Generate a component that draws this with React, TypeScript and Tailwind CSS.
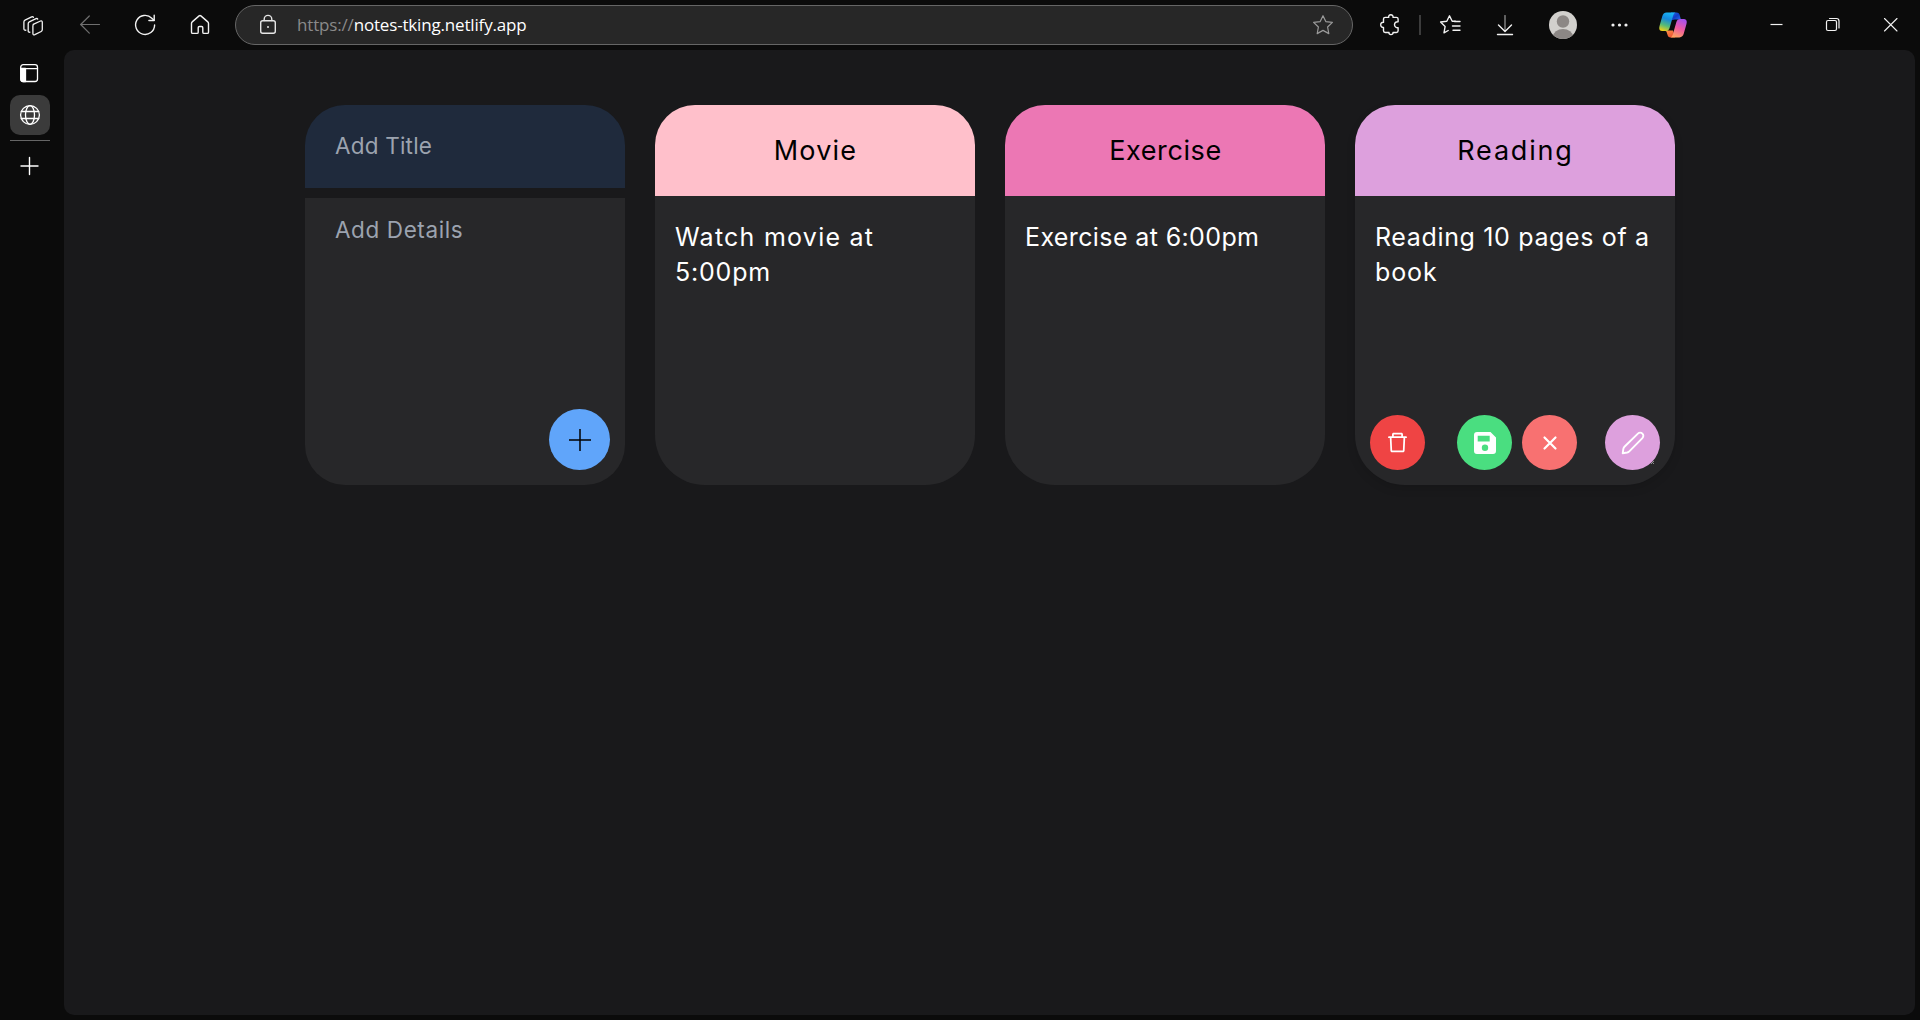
import type { ReactNode } from 'react';
import { AiOutlineDelete } from 'react-icons/ai';

type IconProps = { className?: string; children: ReactNode; size?: number; width?: number };

function Icon({ className = '', children, size = 24, width = 1.2 }: IconProps) {
  return (
    <svg
      width={size}
      height={size}
      viewBox={`0 0 ${size} ${size}`}
      fill="none"
      stroke="currentColor"
      strokeWidth={width}
      strokeLinecap="round"
      strokeLinejoin="round"
      className={`block shrink-0 ${className}`}
    >
      {children}
    </svg>
  );
}

function CopilotLogo() {
  return (
    <svg width="28" height="26" viewBox="0 0 28 26" className="block shrink-0">
      <defs>
        <linearGradient id="cpLeft" x1="0.6" y1="0" x2="0.3" y2="1">
          <stop offset="0" stopColor="#18b4f5" />
          <stop offset="0.35" stopColor="#1688dc" />
          <stop offset="0.7" stopColor="#55bb78" />
          <stop offset="1" stopColor="#e9cf1d" />
        </linearGradient>
        <linearGradient id="cpRight" x1="0.7" y1="0" x2="0.3" y2="1">
          <stop offset="0" stopColor="#a650ee" />
          <stop offset="0.5" stopColor="#ee5aa2" />
          <stop offset="1" stopColor="#ffa45e" />
        </linearGradient>
        <linearGradient id="cpTop" x1="0" y1="0" x2="1" y2="1">
          <stop offset="0" stopColor="#2a72ea" />
          <stop offset="0.5" stopColor="#123bc6" />
          <stop offset="1" stopColor="#2870ee" />
        </linearGradient>
        <linearGradient id="cpBottom" x1="0" y1="0" x2="1" y2="1">
          <stop offset="0" stopColor="#ff9a43" />
          <stop offset="1" stopColor="#e94235" />
        </linearGradient>
      </defs>
      <path d="M12 .6h5.500c2 0 2.800 1 3.300 2.800l1.100 4.200h-6l-5 1z" fill="url(#cpTop)" />
      <path d="M5.500 18.400h8.500l2 7h-4.200c-2.100 0-2.900-1.200-3.400-3l-1-3z" fill="url(#cpBottom)" />
      <path d="M7.600.6h9c-1.500.5-2.100 2-2.700 4l-3.300 11.300c-.6 2-1.700 3.200-4 3.200H3.200c-3 0-3.400-2.600-2.600-5.300L3.200 4.400C4 1.900 5.200.6 7.600.6z" fill="url(#cpLeft)" />
      <path d="M20.400 25.400h-9c1.500-.5 2.100-2 2.700-4l3.300-11.300c.6-2 1.700-3.200 4-3.200h3.400c3 0 3.400 2.600 2.600 5.300l-2.600 9.400c-.8 2.500-2 3.800-4.400 3.800z" fill="url(#cpRight)" />
    </svg>
  );
}

function TopBar() {
  return (
    <header className="flex h-[50px] shrink-0 items-center text-[#f2f2f2]">
      <Icon className="ml-[21px]" width={1.3}>
        <path d="M12.200 11.400 19.500 8c.9-.4 1.800 0 1.800 1.200v7.400c0 .9-.3 1.500-1.100 1.900l-6.400 3.200c-1.100.5-1.900 0-1.900-1.100v-7.700c0-.7.1-1.200.8-1.500z" />
        <path d="M8.900 19.200c-1 .2-1.700-.3-1.700-1.300v-7.200c0-.9.3-1.400 1.100-1.800L15 5.700c.8-.3 1.400-.2 1.700.4" />
        <path d="M4.900 17.200c-1.100.2-2-.3-2-1.400V9c0-.9.3-1.500 1.100-1.900l6.700-3.200c.8-.3 1.400-.2 1.700.4" />
      </Icon>
      <Icon className="ml-[33px] text-[#6f6f6f]">
        <path d="M21.500 11.500h-19M11.300 3 2.700 11.500l8.600 8.600" />
      </Icon>
      <Icon className="ml-[31px]" width={1.4}>
        <path d="M21.600 12a9.500 9.500 0 1 1-2.800-6.800L21 7.300" />
        <path d="M21.200 2.300v5.200h-5.300" />
      </Icon>
      <Icon className="ml-[31px]" width={1.4}>
        <path d="M3.500 10.500c0-.7.2-1.200.7-1.600l6.900-6c.6-.5 1.200-.5 1.800 0l6.900 6c.5.4.7.9.7 1.600v8.700c0 .8-.4 1.200-1.200 1.200h-3.300c-.8 0-1.200-.4-1.200-1.200v-4.500c0-.8-.4-1.200-1.200-1.200h-2.200c-.8 0-1.200.4-1.200 1.200v4.500c0 .8-.4 1.200-1.200 1.200H4.700c-.8 0-1.200-.4-1.200-1.200z" />
      </Icon>

      <div className="ml-[23px] flex h-10 w-[1118px] items-center rounded-full border border-[#666666] bg-[#272727]">
        <Icon className="ml-[20px] text-[#e6e6e6]" width={1.4}>
          <rect x="4.700" y="7.700" width="14.600" height="12.600" rx="2" />
          <path d="M8.200 7.500V6.200a3.800 3.800 0 0 1 7.600 0v1.300" />
          <circle cx="12" cy="14" r="1" fill="currentColor" stroke="none" />
        </Icon>
        <div className="ml-[17px] flex-1 whitespace-nowrap font-['Open_Sans',sans-serif] text-[17px] leading-6 tracking-[-0.17px] text-white">
          <span className="text-[#8a8a8a]">https://</span>notes-tking.netlify.app
        </div>
        <Icon className="mr-[17px] text-[#9a9a9a]">
          <path d="m12 2.700 2.800 5.900 6.600.8-4.800 4.600 1.200 6.600-5.800-3.200-5.800 3.200 1.200-6.600L2.600 9.400l6.600-.8z" />
        </Icon>
      </div>

      <Icon className="ml-[26px]" width={1.4}>
        <path d="M6.200 4.400h3.500c-.3-1.500.6-2.700 2.100-2.700s2.500 1.200 2.200 2.700h3.400c1.100 0 1.700.6 1.700 1.700v2.600c-2-.2-3.600 1.100-3.600 3s1.600 3.200 3.600 3v3.100c0 1.100-.6 1.700-1.700 1.700H14c.2 1.300-.7 2.100-2 2.100s-2.200-.8-2-2.100H6.200c-1.100 0-1.700-.6-1.700-1.700v-3.400c-1.700.2-2.800-1-2.800-2.600s1.100-2.700 2.800-2.500V6.100c0-1.100.6-1.700 1.700-1.700z" />
      </Icon>
      <div className="ml-[16px] h-5 w-[2px] bg-[#3c3c3c]" />
      <Icon className="ml-[18px]" width={1.4}>
        <path d="M16.300 8.300h-3.100L10.500 2.800 7.800 8.200l-6.200.8 4.500 4.500L5 19.800l4.200-2.300" />
        <path d="M15.500 8.500H21M13.500 13H21M14 17.200h7" />
      </Icon>
      <Icon className="ml-[30px]">
        <path d="M12 2.500v15.300" stroke="#9c9c9c" />
        <path d="m5.500 12 6.500 6.400 6.500-6.400M4.500 21.500h15" strokeWidth="1.400" />
      </Icon>
      <svg width="28" height="28" viewBox="0 0 28 28" className="ml-[32px] block shrink-0">
        <clipPath id="avatar"><circle cx="14" cy="14" r="14" /></clipPath>
        <g clipPath="url(#avatar)">
          <rect width="28" height="28" fill="#d2d0cd" />
          <circle cx="14" cy="10.500" r="6.200" fill="#8c8785" />
          <ellipse cx="14" cy="25.500" rx="10" ry="7.600" fill="#8c8785" />
        </g>
      </svg>
      <Icon className="ml-[31px]">
        <g fill="currentColor" stroke="none">
          <circle cx="5" cy="12" r="1.600" /><circle cx="11.500" cy="12" r="1.600" /><circle cx="18" cy="12" r="1.600" />
        </g>
      </Icon>
      <div className="ml-[27px]"><CopilotLogo /></div>
      <Icon className="ml-[78px]">
        <path d="M5.500 11.500h12" strokeLinecap="butt" />
      </Icon>
      <Icon className="ml-[33px]">
        <rect x="4.500" y="7.500" width="10" height="10" rx="1.500" />
        <path d="M7.500 5.500h7c1.500 0 2.500 1 2.500 2.500v7" />
      </Icon>
      <Icon className="ml-[33px]" width={1.1}>
        <path d="m5.500 5.500 12.500 12.500M18 5.500 5.500 18" />
      </Icon>
    </header>
  );
}

function TabRail() {
  return (
    <nav className="flex w-16 shrink-0 flex-col items-start pl-[10px] text-white">
      <div className="grid h-[45px] w-10 place-items-center pr-[2px]">
        <Icon width={1.3}>
          <rect x="3.700" y="3.700" width="16.800" height="16.800" rx="2.500" />
          <path d="M4 7.700h16.500" />
          <path d="M4 7.500h4.500v13H6a2 2 0 0 1-2-2z" fill="currentColor" />
        </Icon>
      </div>
      <div className="grid h-10 w-10 place-items-center rounded-[10px] bg-[#3b3b3b]">
        <Icon width={1.3}>
          <circle cx="12" cy="12" r="9.400" />
          <ellipse cx="12" cy="12" rx="4.500" ry="9.400" />
          <path d="M3.300 8.500h17.400M3.300 15.500h17.400" />
        </Icon>
      </div>
      <div className="mt-[5px] h-px w-10 bg-[#666666]" />
      <Icon className="mt-[13px] ml-[7px]" width={1.4}>
        <path d="M12.500 3.500v17M4 12h17" />
      </Icon>
    </nav>
  );
}

function AddNoteCard() {
  return (
    <section className="flex h-[380px] w-80 flex-col gap-[10px] text-[22.5px] leading-[35px] text-[#9ca3af]">
      <div className="h-[83px] rounded-t-[40px] bg-[#1f2a3c] px-[30px] pt-[23px]">
        <p className="tracking-[0.2px]">Add Title</p>
      </div>
      <div className="flex flex-1 flex-col justify-between rounded-b-[40px] bg-[#272729] pr-[15px] pb-[15px] pl-[30px]">
        <p className="pt-[14px] tracking-[0.6px]">Add Details</p>
        <button className="grid h-[61px] w-[61px] place-items-center self-end rounded-full bg-[#60a5fa] text-black">
          <Icon width={1.5}>
            <path d="M12 1v22M1 12h22" strokeLinecap="butt" />
          </Icon>
        </button>
      </div>
    </section>
  );
}

type CardProps = { title: ReactNode; color: string; body: ReactNode; className?: string; children?: ReactNode };

function NoteCard({ title, color, body, className = '', children }: CardProps) {
  return (
    <section className={`flex h-[380px] w-80 flex-col rounded-t-[40px] rounded-b-[50px] bg-[#272729] ${className}`}>
      <h2 className={`grid h-[91px] place-items-center rounded-t-[40px] pl-px text-[27px] leading-[35px] text-black ${color}`}>
        {title}
      </h2>
      <div className="flex-1 px-5 pt-[24px] text-[25px] leading-[35px] text-white">{body}</div>
      {children}
    </section>
  );
}

function RoundButton({ color, children }: { color: string; children: ReactNode }) {
  return (
    <button className={`relative grid h-[55px] w-[55px] place-items-center rounded-full text-white ${color}`}>
      {children}
    </button>
  );
}

export default function App() {
  return (
    <div className="flex h-[1020px] w-[1920px] flex-col overflow-hidden bg-[#0b0b0b] font-['Inter',sans-serif]">
      <TopBar />
      <div className="flex min-h-0 flex-1 pr-[5px] pb-[5px]">
        <TabRail />
        <main className="flex-1 rounded-[10px] bg-[#19191b] pt-[55px] pl-[241px]">
          <div className="flex gap-[30px]">
            <AddNoteCard />
            <NoteCard
              title={<span className="tracking-[1.2px]">Movie</span>}
              color="bg-[#ffc0cb]"
              body={<><p className="whitespace-nowrap tracking-[1.25px]">Watch movie at</p><p className="tracking-[0.8px]">5:00pm</p></>}
            />
            <NoteCard
              title={<span className="tracking-[0.6px]">Exercise</span>}
              color="bg-[#ec77b4]"
              body={<p className="whitespace-nowrap tracking-[0.38px]">Exercise at 6:00pm</p>}
            />
            <NoteCard
              title={<span className="tracking-[1.8px]">Reading</span>}
              color="bg-[#dda0dd]"
              className="shadow-[0_4px_10px_rgba(0,0,0,0.12)]"
              body={<><p className="whitespace-nowrap tracking-[0.65px]">Reading 10 pages of a</p><p className="tracking-[0.9px]">book</p></>}
            >
              <div className="flex justify-between px-[15px] pb-[15px]">
                <RoundButton color="bg-[#ef4444]"><AiOutlineDelete size={25} /></RoundButton>
                <div className="flex gap-[10px] pl-[4px]">
                  <RoundButton color="bg-[#4ade80]">
                    <svg width="24" height="24" viewBox="0 0 24 24" className="block">
                      <path
                        fill="currentColor"
                        fillRule="evenodd"
                        d="M4 1h13.500L23 6.500V20a3 3 0 0 1-3 3H4a3 3 0 0 1-3-3V4a3 3 0 0 1 3-3zM4.700 4.700v5.800h12V4.700zM12 13.500a3.200 3.200 0 1 0 0 6.400 3.200 3.200 0 0 0 0-6.400z"
                      />
                    </svg>
                  </RoundButton>
                  <RoundButton color="bg-[#f87171]">
                    <Icon width={2.2}><path d="m6.500 6.500 11 11M17.500 6.500l-11 11" /></Icon>
                  </RoundButton>
                </div>
                <RoundButton color="bg-[#dda0dd]">
                  <Icon width={1.9}>
                    <path d="M1.700 22.300 2.400 17.700C2.600 16.800 3 16.200 3.700 15.500L16.900 2.600a3.100 3.100 0 0 1 4.500 4.500L8.300 20.300c-.7.7-1.300 1-2.200 1.200z" />
                  </Icon>
                  <svg width="3" height="3" viewBox="0 0 3 3" className="absolute right-[6px] bottom-[6px]">
                    <path d="M0 3 3 0M2 3 3 2" stroke="#a8a8a8" strokeWidth="0.8" />
                  </svg>
                </RoundButton>
              </div>
            </NoteCard>
          </div>
        </main>
      </div>
    </div>
  );
}
